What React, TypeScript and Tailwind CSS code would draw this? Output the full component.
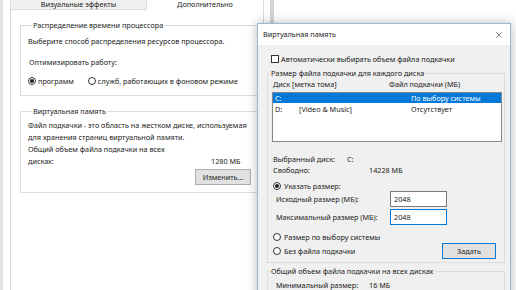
import { X } from "lucide-react";

function Radio({ checked }: { checked?: boolean }) {
  return (
    <span className="flex h-[8px] w-[8px] shrink-0 items-center justify-center rounded-full border border-[#333] bg-white">
      {checked && <span className="h-[4px] w-[4px] rounded-full bg-[#1e1e1e]" />}
    </span>
  );
}

function SystemProperties() {
  return (
    <div className="absolute left-0 top-0 flex h-[290px] w-[274px]">
      <div className="w-[3px] bg-[#e3e3e3]" />
      <div className="flex flex-1 flex-col bg-white pl-[7px] pr-[6px]">
        <div className="flex h-[10px]">
          <div className="flex w-[137px] justify-center border-x border-b border-[#d9d9d9] bg-[#f0f0f0] leading-[8px]">
            Визуальные эффекты
          </div>
          <div className="flex flex-1 justify-center border-r border-[#d9d9d9] leading-[8px]">
            Дополнительно
          </div>
        </div>
        <div className="flex flex-1 flex-col border-x border-[#d9d9d9] pl-[9px] pt-[10px]">
          <fieldset className="mr-[-20px] border border-[#dcdcdc] pb-[8px] pl-[7px]">
            <legend className="ml-[4px] px-[1px] leading-[10px]">Распределение времени процессора</legend>
            <div className="mt-[5px] leading-[12px]">Выберите способ распределения ресурсов процессора.</div>
            <div className="mt-[9px] pl-[1px] leading-[12px]">Оптимизировать работу:</div>
            <div className="mt-[7px] flex h-[12px] items-center">
              <Radio checked />
              <span className="ml-[2px]">программ</span>
              <span className="ml-[14px]">
                <Radio />
              </span>
              <span className="ml-[2px]">служб, работающих в фоновом режиме</span>
            </div>
          </fieldset>

          <fieldset className="mr-[-20px] mt-[10px] border border-[#dcdcdc] pb-[7px] pl-[7px]">
            <legend className="ml-[4px] px-[1px] leading-[10px]">Виртуальная память</legend>
            <div className="mt-[3px] leading-[12px]">
              Файл подкачки - это область на жестком диске, используемая
            </div>
            <div className="leading-[12px]">для хранения страниц виртуальной памяти.</div>
            <div className="leading-[12px]">Общий объем файла подкачки на всех</div>
            <div className="flex leading-[12px]">
              <span className="w-[183px]">дисках:</span>
              <span>1280 МБ</span>
            </div>
            <div className="ml-[167px] mt-[2px] flex h-[16px] w-[56px] items-center justify-center border border-[#adadad] bg-[#e1e1e1]">
              Изменить...
            </div>
          </fieldset>
        </div>
      </div>
      <div className="w-[4px] bg-[#d4d4d4]" />
    </div>
  );
}

function VirtualMemory() {
  return (
    <div className="absolute left-[257px] top-[23px] flex h-[280px] w-[254px] flex-col border border-[#9fb6cf] bg-[#f0f0f0] shadow-[0_0_10px_rgba(0,0,0,0.28)]">
      <div className="flex h-[21px] shrink-0 items-center bg-white pl-[5px] pr-[6px]">
        <span className="flex-1">Виртуальная память</span>
        <X className="h-[10px] w-[10px] text-[#333]" strokeWidth={1.4} />
      </div>

      <div className="mt-[9px] flex h-[10px] items-center pl-[13px]">
        <span className="h-[8px] w-[8px] border border-[#333] bg-white" />
        <span className="ml-[2px]">Автоматически выбирать объем файла подкачки</span>
      </div>

      <fieldset className="ml-[9px] mr-[5px] mt-[4px] border border-[#dcdcdc] pb-[3px]">
        <legend className="ml-[2px] px-[1px] leading-[10px]">Размер файла подкачки для каждого диска</legend>
        <div className="mt-[1px] flex h-[10px] items-center pl-[5px]">
          <span className="w-[116px]">Диск [метка тома]</span>
          <span>Файл подкачки (МБ)</span>
        </div>
        <div className="ml-[4px] mt-[3px] h-[50px] w-[230px] border border-[#828790] bg-white">
          <div className="flex h-[10px] items-center bg-[#0078d7] pl-[2px] text-white">
            <span className="w-[136px]">C:</span>
            <span>По выбору системы</span>
          </div>
          <div className="mt-[1px] flex h-[10px] items-center pl-[2px]">
            <span className="w-[24px]">D:</span>
            <span className="w-[112px]">[Video &amp; Music]</span>
            <span>Отсутствует</span>
          </div>
        </div>

        <div className="mt-[12px] flex h-[10px] items-center pl-[5px]">
          <span className="w-[74px]">Выбранный диск:</span>
          <span>C:</span>
        </div>
        <div className="mt-[1px] flex h-[10px] items-center pl-[5px]">
          <span className="w-[96px]">Свободно:</span>
          <span>14228 МБ</span>
        </div>

        <div className="mt-[6px] flex h-[10px] items-center pl-[5px]">
          <Radio checked />
          <span className="ml-[3px]">Указать размер:</span>
        </div>
        <div className="flex h-[16px] items-center pl-[8px]">
          <span className="w-[114px]">Исходный размер (МБ):</span>
          <span className="flex h-[16px] w-[57px] items-center border border-[#7a7a7a] bg-white pl-[3px]">2048</span>
        </div>
        <div className="mt-[2px] flex h-[16px] items-center pl-[8px]">
          <span className="w-[114px]">Максимальный размер (МБ):</span>
          <span className="flex h-[16px] w-[57px] items-center border border-[#0078d7] bg-white pl-[3px]">2048</span>
        </div>

        <div className="mt-[7px] flex h-[10px] items-center pl-[5px]">
          <Radio />
          <span className="ml-[3px]">Размер по выбору системы</span>
        </div>
        <div className="mt-[1px] flex h-[16px] items-center pl-[5px] pr-[8px]">
          <Radio />
          <span className="ml-[3px] flex-1">Без файла подкачки</span>
          <span className="flex h-[16px] w-[54px] items-center justify-center border border-[#0078d7] bg-[#e1e1e1]">
            Задать
          </span>
        </div>
      </fieldset>

      <fieldset className="ml-[9px] mr-[5px] mt-[3px] border border-[#dcdcdc] pb-[4px]">
        <legend className="ml-[2px] px-[1px] leading-[10px]">Общий объем файла подкачки на всех дисках</legend>
        <div className="mt-[4px] flex h-[10px] items-center pl-[8px]">
          <span className="w-[93px]">Минимальный размер:</span>
          <span>16 МБ</span>
        </div>
      </fieldset>
    </div>
  );
}

export default function App() {
  return (
    <div className="relative h-[290px] w-[516px] overflow-hidden bg-white font-['Noto_Sans',sans-serif] text-[7.25px] text-[#1a1a1a]">
      <SystemProperties />
      <VirtualMemory />
    </div>
  );
}
